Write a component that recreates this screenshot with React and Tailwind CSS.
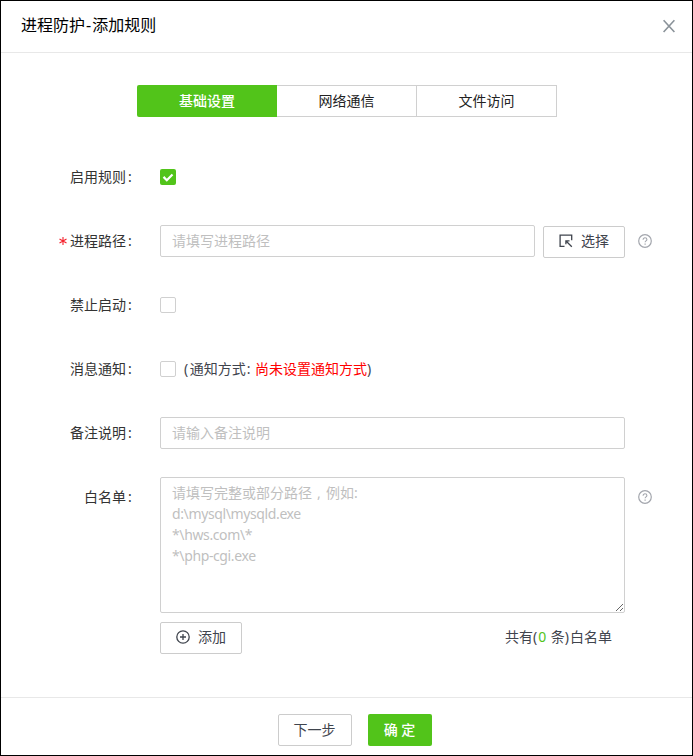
import React, { useState } from 'react'

const tabs = ['基础设置', '网络通信', '文件访问']

const examplePaths = ['d:\\mysql\\mysqld.exe', '*\\hws.com\\*', '*\\php-cgi.exe']

const HelpIcon = () => (
    <svg className="h-[14px] w-[14px] shrink-0" viewBox="0 0 14 14" fill="none" stroke="#a3a6ad">
        <circle cx="7" cy="7" r="6.3" strokeWidth="1.2" />
        <path d="M5.1 5.7C5.1 4.5 5.9 3.8 7 3.8s1.9.7 1.9 1.7c0 1.3-1.8 1.4-1.8 2.7" strokeWidth="1.1" />
        <path d="M7.1 9.5v1.2" strokeWidth="1.2" />
    </svg>
)

const SelectIcon = () => (
    <svg className="h-[14px] w-[14px]" viewBox="0 0 14 14" fill="none" stroke="#3f444d" strokeWidth="1.3">
        <path d="M5.5 12.4H1.1V1.1h11.6v5.2" />
        <path d="M7 7l5.8 5.8M6.9 10.2V6.8h3.6" />
    </svg>
)

const AddIcon = () => (
    <svg className="h-[14px] w-[14px]" viewBox="0 0 14 14" fill="none" stroke="#3f444d" strokeWidth="1.3">
        <circle cx="7" cy="7" r="6.2" />
        <path d="M7 4v6M4 7h6" />
    </svg>
)

const Label = ({ children, required }) => (
    <div className="flex h-8 w-[140px] shrink-0 items-center justify-end pr-[8px] pb-[2px] text-[#333]">
        {required && (
            <svg className="mt-[2px] mr-[3px] h-2 w-2" viewBox="0 0 8 8" stroke="#f5222d" strokeWidth="1.1">
                <path d="M4 0v8M.5 2l7 4M7.5 2l-7 4" />
            </svg>
        )}
        <span>{children}</span>
        <span className="w-[7px] pl-[2px]">:</span>
    </div>
)

const Checkbox = ({ checked, onChange }) => (
    <button
        role="checkbox"
        aria-checked={checked}
        onClick={onChange}
        className={
            checked
                ? 'flex h-4 w-4 items-center justify-center rounded-[2px] bg-[#52c41a]'
                : 'h-4 w-4 rounded-[2px] border border-[#d0d0d0] bg-white'
        }
    >
        {checked && (
            <svg className="h-4 w-4" viewBox="0 0 16 16" fill="none" stroke="#fff" strokeWidth="2.2">
                <path d="M3.5 7.9l3.3 3.3 5.7-5.7" />
            </svg>
        )}
    </button>
)

const Row = ({ label, required, children }) => (
    <div className="flex items-start">
        <Label required={required}>{label}</Label>
        <div className="ml-[19px] flex h-8 items-center">{children}</div>
    </div>
)

const inputClass = 'h-8 rounded-[2px] border border-[#d0d0d0] px-[11px] pb-px text-sm outline-none placeholder:text-[#bfbfbf]'
const buttonClass = 'flex h-8 items-center justify-center rounded-[2px] border border-[#ccc] bg-white text-[#3f444d]'

export default function App() {
    const [tab, setTab] = useState(0)
    const [enabled, setEnabled] = useState(true)
    const [blocked, setBlocked] = useState(false)
    const [notify, setNotify] = useState(false)

    return (
        <div className="flex h-[756px] w-[693px] flex-col border border-black bg-white font-['Noto_Sans','Noto_Sans_CJK_SC',sans-serif] text-sm leading-[21px] text-[#3f444d]">
            <header className="flex h-[52px] shrink-0 items-center justify-between border-b border-[#e8e8e8] pr-4 pl-5">
                <h1 className="pb-1 text-base text-black">
                    进程防护<span className="px-px">-</span>添加规则
                </h1>
                <button aria-label="关闭">
                    <svg className="mb-[2px] h-[14px] w-[14px]" viewBox="0 0 14 14" stroke="#8a9299" strokeWidth="1.6">
                        <path d="M1.6 1.2l10.8 11.8M12.4 1.2L1.6 13" />
                    </svg>
                </button>
            </header>

            <main className="flex flex-1 flex-col pt-8">
                <div className="ml-[136px] flex w-[420px]">
                    {tabs.map((name, i) => (
                        <button
                            key={name}
                            onClick={() => setTab(i)}
                            className={
                                i === tab
                                    ? 'h-8 w-[140px] rounded-l-[2px] bg-[#52c41a] pb-[2px] font-medium text-white'
                                    : 'h-8 w-[140px] border border-l-0 border-[#d0d0d0] pb-[2px] text-[#222]'
                            }
                        >
                            {name}
                        </button>
                    ))}
                </div>

                <div className="mt-11 flex flex-col gap-8">
                    <Row label="启用规则">
                        <Checkbox checked={enabled} onChange={() => setEnabled(!enabled)} />
                    </Row>
                    <Row label="进程路径" required>
                        <input className={`${inputClass} w-[375px]`} placeholder="请填写进程路径" />
                        <button className={`${buttonClass} mt-[2px] ml-2 w-[82px] gap-2`}>
                            <span className="mb-[2px]"><SelectIcon /></span>
                            <span className="pb-[3px]">选择</span>
                        </button>
                        <span className="ml-[13px]"><HelpIcon /></span>
                    </Row>
                    <Row label="禁止启动">
                        <Checkbox checked={blocked} onChange={() => setBlocked(!blocked)} />
                    </Row>
                    <Row label="消息通知">
                        <Checkbox checked={notify} onChange={() => setNotify(!notify)} />
                        <span className="ml-2 pb-[2px]">
                            (<span className="ml-[1.5px]">通知方式</span>
                            <span className="ml-px">: </span>
                            <span className="ml-px text-[#ff0000]">尚未设置通知方式</span>)
                        </span>
                    </Row>
                    <Row label="备注说明">
                        <input className={`${inputClass} w-[465px]`} placeholder="请输入备注说明" />
                    </Row>
                    <div className="-mt-1 flex items-start">
                        <div className="pt-1"><Label>白名单</Label></div>
                        <div className="ml-[19px] w-[465px]">
                            <div
                                role="textbox"
                                aria-multiline="true"
                                className="h-[136px] w-full resize overflow-hidden rounded-[2px] border border-[#d0d0d0] px-[11px] py-1 text-[#bfbfbf]"
                            >
                                <p>
                                    请填写完整或部分路径<span className="inline-block w-[14px] text-center">,</span>例如:
                                </p>
                                {examplePaths.map((path) => (
                                    <p key={path} className="tracking-[-0.38px]">{path}</p>
                                ))}
                            </div>
                            <div className="mt-[9px] flex items-center justify-between pr-[13px]">
                                <button className={`${buttonClass} w-[82px] gap-2`}>
                                    <span className="mb-[2px]"><AddIcon /></span>
                                    <span className="pb-[3px]">添加</span>
                                </button>
                                <span className="pb-[3px]">
                                    共有<span className="mr-px">(</span>
                                    <span className="mr-px text-[#52c41a]">0</span> 条<span className="mr-px">)</span>白名单
                                </span>
                            </div>
                        </div>
                        <span className="mt-[13px] ml-[13px]"><HelpIcon /></span>
                    </div>
                </div>
            </main>

            <footer className="flex h-[58px] shrink-0 justify-center gap-4 border-t border-[#e8e8e8] pt-4 pl-4">
                <button className={`${buttonClass} w-[74px] pb-[2px]`}>下一步</button>
                <button className="h-8 w-16 rounded-[2px] bg-[#52c41a] pb-[2px] font-medium text-white">确 定</button>
            </footer>
        </div>
    )
}
